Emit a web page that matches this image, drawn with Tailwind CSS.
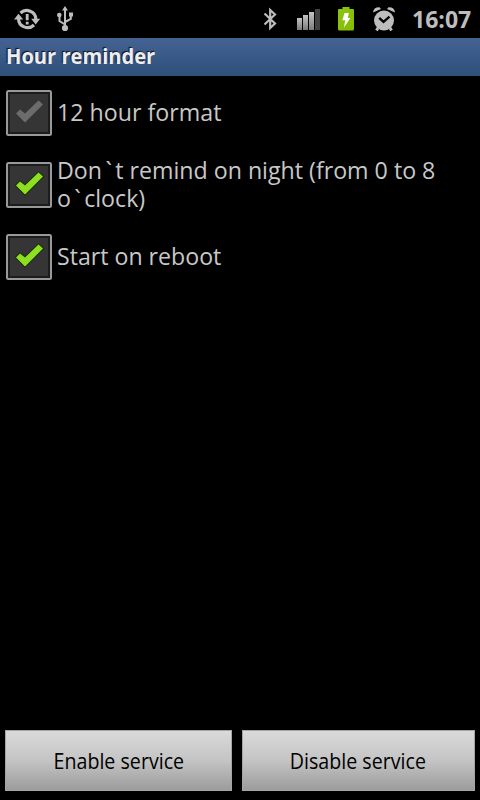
<!DOCTYPE html>
<html lang="en">
<head>
  <meta charset="UTF-8">
  <title>Hour reminder</title>
  <script src="https://cdn.jsdelivr.net/npm/@tailwindcss/browser@4"></script>
</head>
<body class="bg-black w-[480px] h-[800px] flex flex-col overflow-hidden font-['Open_Sans','Noto_Sans',sans-serif]">

  <!-- status bar -->
  <header class="h-[38px] shrink-0 flex items-center pl-[14px] pr-[9px] text-[#bdbdbd]">
    <svg class="w-[26px] h-[26px]" viewBox="0 0 26 26" fill="none" stroke="currentColor" stroke-width="3.2">
      <path d="M6.500 7A9 8.500 0 0 1 21.800 13M20 19A9 8.500 0 0 1 4.600 13"/>
      <path d="M17.200 12.800h9l-4.500 5.600zM0 13.400h9.200L4.500 7.800z" fill="currentColor" stroke="none"/>
      <path d="M13.200 8v6.200M13.200 15.800v2.800" stroke-width="2.800"/>
    </svg>
    <svg class="w-[18px] h-[26px] ml-4" viewBox="0 0 18 26" fill="none" stroke="currentColor" stroke-width="2">
      <path d="M9 22V3M9 18.500l-5.500-3.500V9.500M9 16l5.800-3V9"/>
      <path d="M9 0l3 4.500H6zM13 6.500h4v4h-4z" fill="currentColor" stroke="none"/>
      <circle cx="3.300" cy="9" r="2.300" fill="currentColor" stroke="none"/>
      <circle cx="9" cy="22" r="3.100" fill="currentColor" stroke="none"/>
    </svg>

    <div class="ml-auto flex items-center">
      <svg class="w-[14px] h-[24px]" viewBox="0 0 14 24" fill="none" stroke="currentColor" stroke-width="2.200">
        <path d="M.500 6.500l10.500 10-4.800 4.500V3l4.800 4.500L.500 17.500"/>
      </svg>
      <svg class="w-[24px] h-[22px] ml-[19px]" viewBox="0 0 24 22">
        <defs>
          <linearGradient id="bar" x1="0" y1="0" x2="0" y2="1">
            <stop offset="0" stop-color="#c4c4c4"/>
            <stop offset="1" stop-color="#7c7c7c"/>
          </linearGradient>
        </defs>
        <g fill="url(#bar)">
          <rect x="0" y="10" width="5" height="12"/>
          <rect x="6" y="7" width="5" height="15"/>
          <rect x="12" y="4" width="5" height="18"/>
        </g>
        <rect x="18" y="1" width="5" height="21" fill="#424242"/>
      </svg>
      <svg class="w-[18px] h-[26px] ml-[16px]" viewBox="0 0 18 26">
        <defs>
          <linearGradient id="battery" x1="0" y1="0" x2="1" y2="1">
            <stop offset="0" stop-color="#8fc415"/>
            <stop offset="1" stop-color="#83bd00"/>
          </linearGradient>
        </defs>
        <path d="M5.500 1h7v2H16q1 0 1 1v19q0 1.500-1.500 1.500h-13Q1 24.500 1 23V4q0-1 1-1h3.500z" fill="url(#battery)"/>
        <path d="M7.500 7h4.300l-1 5h2.500L7 21.500l1.200-7.300H5.300z" fill="#fff"/>
      </svg>
      <svg class="w-[24px] h-[26px] ml-[17px]" viewBox="0 0 24 26" fill="none" stroke="currentColor">
        <circle cx="12" cy="14.500" r="10" fill="currentColor" stroke="none"/>
        <path d="M1 6.500Q1.500 1 7.500 1.200L9 3zM23 6.500Q22.500 1 16.500 1.200L15 3z" fill="currentColor" stroke="none"/>
        <path d="M6 22l-1.500 2.500M18 22l1.500 2.500" stroke-width="3"/>
        <path d="M7.200 11.800l4.300 4 6-5.200" stroke="#000" stroke-width="2.400"/>
      </svg>
      <span class="w-[59px] ml-[16px] text-[23.500px] leading-[38px] font-bold whitespace-nowrap origin-left scale-x-[0.98]">16:07</span>
    </div>
  </header>

  <h1 class="h-[38px] shrink-0 pl-[6px] text-[21.500px] leading-[36px] font-bold text-[#eeeeee] bg-linear-to-b from-[#446394] to-[#2e5079] [text-shadow:-1px_-1px_1px_#111]"><span class="inline-block origin-left scale-x-[0.935]">Hour reminder</span></h1>

  <main class="grow flex flex-col text-[24px] leading-[28px] text-[#c8c8c8]">
    <label class="h-[72px] flex items-center gap-[5px] pl-[6px] pt-[1px]">
      <svg class="w-[46px] h-[46px] shrink-0" viewBox="0 0 46 46">
        <rect x="1" y="1" width="44" height="44" rx="1.500" fill="#353535" stroke="#999" stroke-width="2"/>
        <rect x="3" y="3" width="40" height="40" fill="none" stroke="#1c1c1c" stroke-width="2"/>
        <path d="M10 23.500l4-4 5 4L32.500 10.500l4.500 4L19 32.500z" fill="#6c6c6c"/>
      </svg>
      <span class="-mt-[2px] whitespace-nowrap origin-left scale-x-[0.967]">12 hour format</span>
    </label>
    <label class="h-[72px] flex items-center gap-[5px] pl-[6px] pt-[1px]">
      <svg class="w-[46px] h-[46px] shrink-0" viewBox="0 0 46 46">
        <rect x="1" y="1" width="44" height="44" rx="1.500" fill="#353535" stroke="#999" stroke-width="2"/>
        <rect x="3" y="3" width="40" height="40" fill="none" stroke="#1c1c1c" stroke-width="2"/>
        <path d="M10 23.500l4-4 5 4L32.500 10.500l4.500 4L19 32.500z" fill="#8ce020" stroke="#1d2b0c" stroke-width="2" paint-order="stroke"/>
      </svg>
      <span class="-mt-[2px] whitespace-nowrap origin-left scale-x-[0.966]">Don<span class="px-[3.500px]">`</span>t remind on night (from 0 to 8<br>o<span class="px-[3.500px]">`</span>clock)</span>
    </label>
    <label class="h-[72px] flex items-center gap-[5px] pl-[6px] pt-[1px]">
      <svg class="w-[46px] h-[46px] shrink-0" viewBox="0 0 46 46">
        <rect x="1" y="1" width="44" height="44" rx="1.500" fill="#353535" stroke="#999" stroke-width="2"/>
        <rect x="3" y="3" width="40" height="40" fill="none" stroke="#1c1c1c" stroke-width="2"/>
        <path d="M10 23.500l4-4 5 4L32.500 10.500l4.500 4L19 32.500z" fill="#8ce020" stroke="#1d2b0c" stroke-width="2" paint-order="stroke"/>
      </svg>
      <span class="-mt-[2px] whitespace-nowrap origin-left scale-x-[0.964]">Start on reboot</span>
    </label>
  </main>

  <footer class="shrink-0 flex gap-[10px] pl-[5px] pr-[5px] pb-[9px] text-[21px] text-black">
    <button class="w-[227px] h-[61px] pt-[2px] border border-[#a5a5a5] bg-linear-to-b from-[#dadada] via-[#c4c4c4] to-[#9c9c9c]"><span class="inline-block scale-x-[0.935]">Enable service</span></button>
    <button class="w-[233px] h-[61px] pt-[2px] pr-[2px] border border-[#a5a5a5] bg-linear-to-b from-[#dadada] via-[#c4c4c4] to-[#9c9c9c]"><span class="inline-block scale-x-[0.935]">Disable service</span></button>
  </footer>

</body>
</html>
